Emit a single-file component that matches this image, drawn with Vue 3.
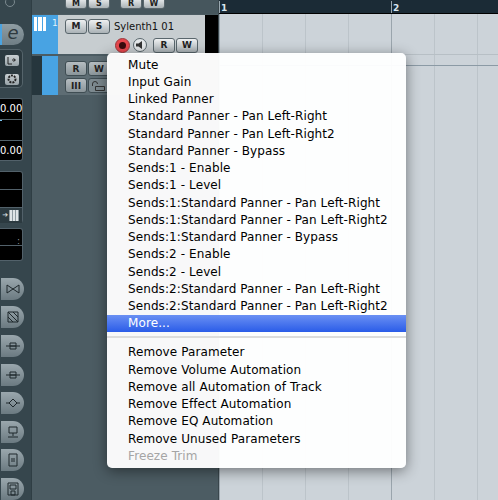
<template>
  <div class="daw">
    <aside class="inspector">
      <div class="knob-row"><span class="knob"></span></div>
      <div class="e-row">
        <span class="e-blue"></span>
        <span class="e-btn">e</span>
      </div>
      <div class="tool-group">
        <span class="tool">
          <svg width="12" height="9" viewBox="0 0 12 9"><path d="M2 1v7h4M6 4h3M7.500 2.500 9.500 4 7.500 5.500" fill="none" stroke="#222" /></svg>
        </span>
        <span class="tool">
          <svg width="10" height="10" viewBox="0 0 10 10"><circle cx="5" cy="5" r="3.500" fill="none" stroke="#222" stroke-width="2" stroke-dasharray="2 1" /></svg>
        </span>
      </div>
      <div class="display d-one">
        <div class="cell-val"><span class="val">0.00</span></div>
        <div class="cell-val"><span class="level"></span></div>
        <div class="cell-val"><span class="val">0.00</span></div>
      </div>
      <div class="display d-two">
        <div class="cell"></div>
        <div class="cell"></div>
        <div class="cell-keys">
          <span class="arrow">➔</span>
          <span class="keys"><i></i><i></i><i></i></span>
        </div>
      </div>
      <div class="display d-three">
        <div class="cell3"><span class="dots">:</span></div>
        <div class="cell3"></div>
      </div>
      <div class="side-btns">
        <span v-for="(icon, i) in sideIcons" :key="i" class="side-btn">
          <svg width="16" height="14" viewBox="0 0 16 14" fill="none" stroke="#1f282c" stroke-width="1">
            <path :d="icon" />
          </svg>
        </span>
      </div>
    </aside>

    <section class="tracks">
      <div class="track-head">
        <span class="btn mini">M</span><span class="btn mini">S</span>
        <span class="btn mini second">R</span><span class="btn mini">W</span>
      </div>
      <div class="track-main">
        <div class="track-blue">
          <span class="piano"><i></i><i></i><i></i></span>
          <span class="num">1</span>
        </div>
        <div class="track-body">
          <div class="line">
            <span class="btn">M</span><span class="btn">S</span>
            <span class="name">Sylenth1 01</span>
          </div>
          <div class="line line-b">
            <span class="rec"><i></i></span>
            <span class="mon">
              <svg width="10" height="10" viewBox="0 0 10 10"><path d="M1 3.500h2.500L7 1v8L3.500 6.500H1z" fill="#333" /></svg>
            </span>
            <span class="btn rw">R</span><span class="btn">W</span>
          </div>
        </div>
        <div class="track-black"></div>
      </div>
      <div class="track-sub">
        <div class="sub-dark"></div>
        <div class="sub-blue"></div>
        <div class="sub-body">
          <div class="line">
            <span class="btn dim">R</span><span class="btn dim">W</span>
          </div>
          <div class="line">
            <span class="btn dim">III</span>
            <span class="btn dim lock">
              <svg width="16" height="10" viewBox="0 0 16 10" fill="none" stroke="#333"><path d="M1.500 5V3a2.500 2.500 0 0 1 5 0M4.500 5.500h9v4h-9z" /></svg>
            </span>
          </div>
        </div>
      </div>
    </section>

    <section class="arrange">
      <div class="ruler">
        <span class="bar">1</span>
        <span class="bar">2</span>
      </div>
      <div class="grid"></div>
    </section>

    <div class="menu">
      <ul class="group">
        <li v-for="item in paramItems" :key="item">{{ item }}</li>
        <li class="active">More...</li>
      </ul>
      <div class="sep"></div>
      <ul class="group">
        <li v-for="item in removeItems" :key="item">{{ item }}</li>
        <li class="disabled">Freeze Trim</li>
      </ul>
    </div>
  </div>
</template>

<script setup>
const paramItems = [
  'Mute',
  'Input Gain',
  'Linked Panner',
  'Standard Panner - Pan Left-Right',
  'Standard Panner - Pan Left-Right2',
  'Standard Panner - Bypass',
  'Sends:1 - Enable',
  'Sends:1 - Level',
  'Sends:1:Standard Panner - Pan Left-Right',
  'Sends:1:Standard Panner - Pan Left-Right2',
  'Sends:1:Standard Panner - Bypass',
  'Sends:2 - Enable',
  'Sends:2 - Level',
  'Sends:2:Standard Panner - Pan Left-Right',
  'Sends:2:Standard Panner - Pan Left-Right2',
]

const removeItems = [
  'Remove Parameter',
  'Remove Volume Automation',
  'Remove all Automation of Track',
  'Remove Effect Automation',
  'Remove EQ Automation',
  'Remove Unused Parameters',
]

const sideIcons = [
  'M2 3l12 8V3L2 11z',
  'M3 2h10v10H3zM3 2l10 10M8 2l5 5M3 7l5 5',
  'M1 7h14M5 4h6v6H5zM5 7h6',
  'M1 7h14M5 4h6v6H5zM5 7h6',
  'M1 7h3M12 7h3M8 3l4 4-4 4-4-4z',
  'M4 2h8v6H4zM8 8v3M3 12h10',
  'M4 1h8v12H4zM6 6h4M6 8h4',
  'M3 1h10v12H3zM5 3h6v4H5zM6 9h4v4H6z',
]
</script>

<style>
html, body {
  margin: 0;
  background: #4c5c63;
}
</style>

<style scoped>
.daw {
  position: relative;
  display: flex;
  width: 498px;
  height: 500px;
  overflow: hidden;
  background: #4c5c63;
  font-family: "DejaVu Sans", sans-serif;
}

/* left inspector strip */
.inspector {
  width: 31px;
  flex: none;
  display: flex;
  flex-direction: column;
  background: #36464d;
  border-right: 1px solid #2f3e44;
}

.knob-row {
  height: 25px;
  display: flex;
  justify-content: flex-end;
  padding-right: 16px;
}

.knob {
  width: 8px;
  height: 8px;
  margin-top: -3px;
  border: 1px solid #7c8a90;
  border-radius: 50%;
}

.e-row {
  height: 21px;
  display: flex;
}

.e-blue {
  width: 2px;
  background: #4aa3e0;
}

.e-btn {
  width: 22px;
  border-radius: 0 11px 11px 0;
  background: linear-gradient(#8f9da3, #6f7e85);
  color: #2f3a3f;
  font-size: 18px;
  line-height: 18px;
  text-align: center;
  font-style: italic;
}

.tool-group {
  margin: 4px 8px 0 0;
  height: 40px;
  padding: 5px 3px 0 0;
  box-sizing: border-box;
  background: #2c3a40;
  border-radius: 0 5px 5px 0;
  border: 1px solid #55646b;
  border-left: 0;
  display: flex;
  flex-direction: column;
  align-items: flex-end;
  gap: 8px;
}

.tool {
  width: 14px;
  height: 11px;
  display: flex;
  align-items: center;
  justify-content: center;
  background: linear-gradient(#c9cfd2, #98a3a8);
  border-radius: 2px;
}

.display {
  margin-right: 8px;
  box-sizing: border-box;
  background: #000;
  border: 1px solid #52616a;
  border-left: 0;
  border-radius: 0 3px 3px 0;
}

.d-one {
  margin-top: 10px;
  height: 63px;
}

.cell-val {
  position: relative;
  height: 21px;
  box-sizing: border-box;
  padding-top: 4px;
  border-bottom: 1px solid #52616a;
  text-align: right;
}

.cell-val:last-child {
  height: 19px;
  border: 0;
}

.level {
  position: absolute;
  top: 0;
  left: 0;
  width: 2px;
  height: 1px;
  background: #7cc4f0;
}

.val {
  display: block;
  color: #fff;
  font-size: 10px;
  line-height: 12px;
}

.d-two {
  margin-top: 10px;
  height: 52px;
}

.cell {
  height: 17px;
  border-bottom: 1px solid #52616a;
}

.cell-keys {
  height: 15px;
  background: #2c3a40;
  display: flex;
  align-items: center;
  justify-content: flex-end;
  gap: 1px;
  padding-right: 3px;
}

.arrow {
  color: #d5dbde;
  font-size: 7px;
}

.keys {
  width: 10px;
  height: 11px;
  display: flex;
  gap: 1px;
  padding: 0 1px;
  box-sizing: border-box;
  background: #8e9aa0;
}

.keys i {
  flex: 1;
  background: #dfe4e6;
}

.d-three {
  margin-top: 5px;
  height: 33px;
}

.cell3 {
  height: 16px;
  border-bottom: 1px solid #52616a;
  text-align: right;
}

.cell3:last-child {
  border: 0;
}

.dots {
  color: #8b979c;
  font-size: 9px;
  line-height: 14px;
  padding-right: 2px;
}

.side-btns {
  margin-top: 17px;
  display: flex;
  flex-direction: column;
  gap: 6.6px;
}

.side-btn {
  width: 24px;
  height: 22px;
  flex: none;
  display: flex;
  align-items: center;
  justify-content: center;
  padding-left: 1px;
  box-sizing: border-box;
  background: linear-gradient(#9aa7ad, #6b7a81);
  border-left: 1px solid #36464d;
  border-radius: 0 11px 11px 0;
}

/* track list */
.tracks {
  width: 187px;
  flex: none;
  display: flex;
  flex-direction: column;
  border-right: 1px solid #3a474d;
  box-sizing: border-box;
}

.track-head {
  height: 14px;
  display: flex;
  align-items: flex-end;
  padding: 0 0 5px 33px;
  background: #46565d;
  overflow: hidden;
  box-sizing: border-box;
}

.btn {
  min-width: 20px;
  height: 13px;
  flex: none;
  display: flex;
  align-items: center;
  justify-content: center;
  margin-right: 1px;
  background: linear-gradient(#eef0f1, #aab2b6);
  border: 1px solid #59666c;
  border-radius: 3px;
  color: #222;
  font-size: 9px;
  font-weight: 700;
}

.mini {
  height: 10px;
  align-items: flex-end;
  font-size: 8px;
}

.second {
  margin-left: 9px;
}

.track-main {
  height: 39px;
  margin-top: 1px;
  display: flex;
}

.track-blue {
  width: 26px;
  display: flex;
  gap: 6px;
  background: #48a3e3;
}

.piano {
  width: 12px;
  height: 14px;
  margin: 2px 0 0 2px;
  display: flex;
  gap: 1px;
}

.piano i {
  flex: 1;
  background: #fff;
}

.num {
  color: #dff1fc;
  font-size: 9px;
  line-height: 17px;
}

.track-body {
  flex: 1;
  padding: 2px 0 0 7px;
  background: #c7cdd0;
}

.line {
  display: flex;
  align-items: center;
  height: 18px;
}

.line-b {
  justify-content: flex-end;
  margin-top: 1px;
  padding-right: 6px;
}

.name {
  margin-left: 3px;
  color: #111;
  font-size: 10px;
}

.rec {
  width: 15px;
  height: 15px;
  display: flex;
  align-items: center;
  justify-content: center;
  background: #e8474d;
  border: 1px solid #9a3a3e;
  border-radius: 50%;
  box-sizing: border-box;
}

.rec i {
  width: 7px;
  height: 7px;
  background: #3a0b0d;
  border-radius: 50%;
}

.mon {
  width: 14px;
  height: 14px;
  display: flex;
  align-items: center;
  justify-content: center;
  margin: 0 6px 0 3px;
  background: #e4e7e9;
  border: 1px solid #59666c;
  border-radius: 50%;
  box-sizing: border-box;
}

.track-black {
  width: 13px;
  background: #000;
}

.track-sub {
  height: 39px;
  margin-top: 2px;
  display: flex;
}

.sub-dark {
  width: 10px;
  background: #26363d;
}

.sub-blue {
  width: 16px;
  background: #48a3e3;
}

.sub-body {
  flex: 1;
  padding: 4px 0 0 7px;
  background: #5e6d74;
}

.sub-body .line {
  height: 17px;
}

.dim {
  background: linear-gradient(#b6bdc1, #8a959a);
  border-color: #3f4d53;
}

.lock {
  background: #7d8a90;
}

/* arrange window */
.arrange {
  flex: 1;
  display: flex;
  flex-direction: column;
}

.ruler {
  height: 14px;
  flex: none;
  display: flex;
  box-sizing: border-box;
  background: #1b2b36;
  border-bottom: 1px solid #000;
}

.bar {
  width: 172px;
  padding-left: 1px;
  margin-top: 1px;
  border-left: 1px solid #9aa8b0;
  color: #d8e6f0;
  font-size: 9px;
  font-weight: 700;
  line-height: 14px;
  box-sizing: border-box;
}

.grid {
  flex: 1;
  background:
    linear-gradient(#8b9aa5, #8b9aa5) 0 51px / 100% 1px no-repeat,
    linear-gradient(#b7bfc5, #b7bfc5) 0 40px / 100% 1px no-repeat,
    repeating-linear-gradient(90deg, #9aa5ad 0 1px, transparent 1px 172px),
    repeating-linear-gradient(90deg, #bcc4ca 0 1px, transparent 1px 43px),
    #ccd3d9;
}

/* context menu */
.menu {
  position: absolute;
  left: 107px;
  top: 53px;
  width: 299px;
  height: 415px;
  padding-top: 3.500px;
  box-sizing: border-box;
  background: rgba(255, 255, 255, .96);
  border-radius: 5px;
  box-shadow: 0 3px 14px rgba(0, 0, 0, .45);
  color: #000;
  font-size: 12px;
  letter-spacing: .1px;
}

.group {
  margin: 0;
  padding: 0;
  list-style: none;
}

.group li {
  height: 17.270px;
  padding-left: 21px;
  line-height: 17px;
  white-space: nowrap;
}

.group .active {
  margin-top: -.5px;
  background: linear-gradient(#6a90f3, #2a5ce8);
  color: #fff;
}

.group .disabled {
  color: #a5a5a5;
}

.sep {
  height: 2px;
  margin: 4px 0 6px;
  background: #dcdcdc;
}
</style>
